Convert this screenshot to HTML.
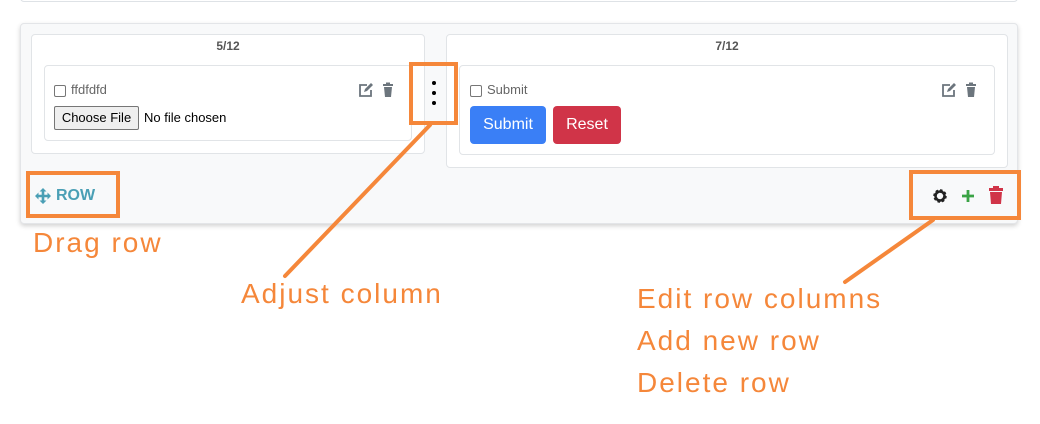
<!DOCTYPE html>
<html><head><meta charset="utf-8"><style>
*{box-sizing:border-box;margin:0;padding:0}
body{width:1040px;height:424px;background:#fff;position:relative;overflow:hidden;font-family:"Liberation Sans",Arial,sans-serif}
.a{position:absolute}
.top{left:20px;top:-10px;width:998px;height:12px;border:1px solid #dee2e6;border-radius:4px}
.card{left:20px;top:23px;width:998px;height:201px;background:#f8f9fa;border:1px solid #e3e5e8;border-radius:4px;box-shadow:0 2px 5px rgba(0,0,0,.18)}
.col{background:#fff;border:1px solid #e1e4e7;border-radius:4px}
.hd{font-size:12px;font-weight:bold;color:#555;text-align:center;width:100%;top:4px}
.inner{background:#fff;border:1px solid #e1e4e7;border-radius:4px}
.cb{width:12px;height:12px;border:1px solid #767676;border-radius:2px;background:#fff}
.lbl{font-size:13px;color:#666}
.btn{color:#fff;font-size:16px;border-radius:4px;text-align:center;line-height:38px;height:38px}
.or{border:4px solid #f5873a}
.t{color:#f5873a;font-size:28px;white-space:nowrap;letter-spacing:2px}
</style></head><body>
<div class="a top"></div>
<div class="a card"></div>
<div class="a col" style="left:31px;top:34px;width:394px;height:120px"><div class="a hd">5/12</div></div>
<div class="a col" style="left:446px;top:34px;width:562px;height:134px"><div class="a hd">7/12</div></div>
<div class="a inner" style="left:44px;top:65px;width:368px;height:76px"></div>
<div class="a inner" style="left:459px;top:65px;width:536px;height:90px"></div>
<div class="a cb" style="left:54px;top:85px"></div>
<div class="a lbl" style="left:71px;top:82px">ffdfdfd</div>
<div class="a" style="left:54px;top:106px;width:85px;height:24px;border:1px solid #767676;border-radius:2px;background:#efefef;font-size:13px;line-height:22px;text-align:center;color:#000">Choose File</div>
<div class="a" style="left:144px;top:110px;font-size:13px;color:#000">No file chosen</div>
<div class="a cb" style="left:470px;top:85px"></div>
<div class="a lbl" style="left:487px;top:82px">Submit</div>
<div class="a btn" style="left:470px;top:106px;width:76px;background:#3a7ff6">Submit</div>
<div class="a btn" style="left:553px;top:106px;width:68px;background:#d03448">Reset</div>
<svg class="a" style="left:358px;top:82px" width="40" height="16" viewBox="0 0 40 16">
<g fill="none" stroke="#6c757d" stroke-width="1.8"><path d="M9 3H2v11h11V8"/></g>
<path d="M6 10l1-3 6-6 2 2-6 6z" fill="#6c757d"/>
<rect x="25" y="2" width="10" height="2" fill="#6c757d"/><rect x="28" y="0.5" width="4" height="2" fill="#6c757d"/>
<path d="M26 5h8l-1 10h-6z" fill="#6c757d"/>
</svg>
<svg class="a" style="left:941px;top:82px" width="40" height="16" viewBox="0 0 40 16">
<g fill="none" stroke="#6c757d" stroke-width="1.8"><path d="M9 3H2v11h11V8"/></g>
<path d="M6 10l1-3 6-6 2 2-6 6z" fill="#6c757d"/>
<rect x="25" y="2" width="10" height="2" fill="#6c757d"/><rect x="28" y="0.5" width="4" height="2" fill="#6c757d"/>
<path d="M26 5h8l-1 10h-6z" fill="#6c757d"/>
</svg>
<div class="a" style="left:432px;top:81px;width:4px;height:4px;border-radius:2px;background:#000"></div>
<div class="a" style="left:432px;top:91px;width:4px;height:4px;border-radius:2px;background:#000"></div>
<div class="a" style="left:432px;top:101px;width:4px;height:4px;border-radius:2px;background:#000"></div>
<svg class="a" style="left:35px;top:188px" width="16" height="16" viewBox="0 0 16 16" fill="#4a9fb5">
<path d="M8 0l3.5 3.5H9.3v3.2h3.2V4.5L16 8l-3.5 3.5V9.3H9.3v3.2h2.2L8 16l-3.5-3.5h2.2V9.3H3.5v2.2L0 8l3.5-3.5v2.2h3.2V3.5H4.5z"/></svg>
<div class="a" style="left:56px;top:187px;font-size:16px;font-weight:bold;color:#4a9fb5">ROW</div>
<svg class="a" style="left:931px;top:188px" width="18" height="16" viewBox="0 0 16 16">
<circle cx="8" cy="8" r="5" fill="none" stroke="#222" stroke-width="3.5" stroke-dasharray="2.2 1.7"/>
<circle cx="8" cy="8" r="4.5" fill="none" stroke="#222" stroke-width="2.5"/>
</svg>
<svg class="a" style="left:960px;top:188px" width="16" height="16" viewBox="0 0 16 16"><path d="M8 2v12M2 8h12" stroke="#3aa345" stroke-width="2.8"/></svg>
<svg class="a" style="left:988px;top:186px" width="16" height="18" viewBox="0 0 16 18" fill="#d03448">
<rect x="1" y="2" width="14" height="3"/><rect x="5" y="0" width="6" height="3"/><path d="M2 6h12l-1 12H3z"/></svg>
<div class="a or" style="left:409px;top:62px;width:49px;height:63px"></div>
<div class="a or" style="left:26px;top:171px;width:94px;height:47px"></div>
<div class="a or" style="left:909px;top:170px;width:112px;height:50px"></div>
<svg class="a" style="left:0;top:0" width="1040" height="424"><g stroke="#f5873a" stroke-width="4" stroke-linecap="round"><line x1="430" y1="125" x2="285" y2="276"/><line x1="933" y1="220" x2="845" y2="282"/></g></svg>
<div class="a t" style="left:33px;top:227px">Drag row</div>
<div class="a t" style="left:241px;top:278px">Adjust column</div>
<div class="a t" style="left:637px;top:283px">Edit row columns</div>
<div class="a t" style="left:637px;top:325px">Add new row</div>
<div class="a t" style="left:637px;top:367px">Delete row</div>
</body></html>
